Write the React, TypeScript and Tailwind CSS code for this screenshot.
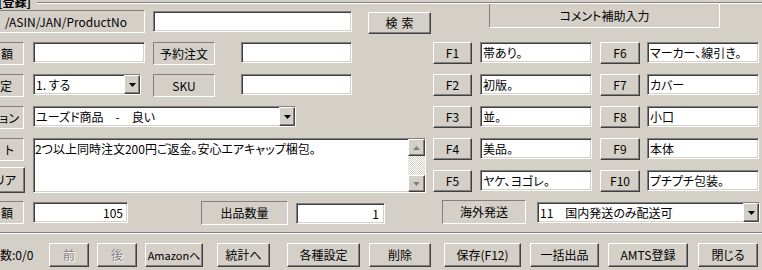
import type { ReactNode } from 'react';

const sunken =
  'bg-white border border-t-[#808080] border-l-[#808080] border-b-white border-r-white shadow-[inset_1px_1px_0_#404040,inset_-1px_-1px_0_#d4d0c8]';
const raised =
  'bg-[#d4d0c8] border border-t-white border-l-white border-b-[#404040] border-r-[#404040] shadow-[inset_-1px_-1px_0_#808080,inset_1px_1px_0_#d4d0c8]';
const edge = 'border border-t-[#808080] border-l-[#808080] border-b-white border-r-white';

function Field({ className = '', children }: { className?: string; children?: ReactNode }) {
  return <div className={`${sunken} flex items-center px-[2px] whitespace-nowrap overflow-hidden ${className}`}>{children}</div>;
}

function Label({ className = '', children }: { className?: string; children?: ReactNode }) {
  return <div className={`${edge} flex items-center whitespace-nowrap ${className}`}>{children}</div>;
}

function Btn({ className = '', disabled = false, children }: { className?: string; disabled?: boolean; children?: ReactNode }) {
  return (
    <div
      className={`${raised} flex items-center justify-center whitespace-nowrap ${
        disabled ? 'text-[#808080] [text-shadow:1px_1px_0_#fff]' : ''
      } ${className}`}
    >
      {children}
    </div>
  );
}

function Arrow({ up = false, color = '#000' }: { up?: boolean; color?: string }) {
  return (
    <svg width="7" height="4" viewBox="0 0 7 4">
      <path d={up ? 'M3.5 0 L7 4 L0 4 Z' : 'M0 0 L7 0 L3.5 4 Z'} fill={color} />
    </svg>
  );
}

function Select({ className = '', children }: { className?: string; children?: ReactNode }) {
  return (
    <div className={`${sunken} flex items-stretch ${className}`}>
      <div className="flex-1 flex items-center pl-[2px] whitespace-nowrap overflow-hidden">{children}</div>
      <div className={`${raised} w-[16px] flex items-center justify-center`}>
        <Arrow />
      </div>
    </div>
  );
}

const fkeys = [
  ['F1', '帯あり。', 'F6', 'マーカー、線引き。'],
  ['F2', '初版。', 'F7', 'カバー'],
  ['F3', '並。', 'F8', '小口'],
  ['F4', '美品。', 'F9', '本体'],
  ['F5', 'ヤケ、ヨゴレ。', 'F10', 'プチプチ包装。'],
];

export default function App() {
  return (
    <div className="relative w-[762px] h-[270px] overflow-hidden bg-[#d4d0c8] text-black text-[12px] leading-none font-['Noto_Sans_CJK_JP',sans-serif] [font-feature-settings:'palt']">
      {/* group frame */}
      <div className="absolute left-[37px] right-0 top-[2px] h-[2px] border-t border-t-[#808080] border-b border-b-white" />
      <div className="absolute left-[-2px] top-[-4px] font-bold text-[12px]">[登録]</div>

      <div className="flex h-[232px] items-start">
        {/* left column */}
        <div className="w-[433px] flex flex-col pt-[10px]">
          <div className="flex items-start h-[23px]">
            <Label className="w-[145px] h-[23px] border-l-0 justify-end pr-[17px]">/ASIN/JAN/ProductNo</Label>
            <Field className="ml-[8px] mt-[1px] w-[199px] h-[21px]" />
            <Btn className="ml-[16px] mt-[2px] w-[63px] h-[22px] tracking-[4px] pl-[4px]">検索</Btn>
          </div>

          <div className="flex items-start mt-[9px] h-[23px]">
            <Label className="w-[24px] h-[23px] border-l-0 justify-end pr-[10px]">額</Label>
            <Field className="ml-[9px] w-[112px] h-[21px]" />
            <Label className="ml-[8px] w-[62px] h-[23px] justify-center">予約注文</Label>
            <Field className="ml-[26px] w-[111px] h-[21px]" />
          </div>

          <div className="flex items-start mt-[9px] h-[23px]">
            <Label className="w-[24px] h-[23px] border-l-0 justify-end pr-[11px]">定</Label>
            <Select className="ml-[9px] w-[108px] h-[21px]">1. する</Select>
            <Label className="ml-[12px] w-[62px] h-[23px] justify-center">SKU</Label>
            <Field className="ml-[26px] w-[111px] h-[21px]" />
          </div>

          <div className="flex items-start mt-[9px] h-[23px]">
            <Label className="w-[24px] h-[23px] border-l-0 justify-end pr-[4px]">ション</Label>
            <Select className="ml-[9px] w-[263px] h-[21px]">ユーズド商品　-　良い</Select>
          </div>

          <div className="flex items-start mt-[9px]">
            <div className="flex flex-col w-[25px]">
              <Label className="w-[24px] h-[23px] border-l-0 justify-end pr-[9px]">ト</Label>
              <Btn className="mt-[6px] w-[25px] h-[26px] border-l-0 justify-end pr-[8px]">リア</Btn>
            </div>
            <div className={`${sunken} ml-[8px] w-[393px] h-[55px] flex`}>
              <div className="flex-1 pl-[1px] pt-[4px] whitespace-nowrap">2つ以上同時注文200円ご返金。安心エアキャップ梱包。</div>
              <div className="w-[17px] flex flex-col">
                <div className={`${raised} h-[17px] flex items-center justify-center`}>
                  <Arrow up color="#808080" />
                </div>
                <div className="flex-1 bg-[repeating-conic-gradient(#ffffff_0_25%,#d4d0c8_0_50%)] bg-[length:2px_2px]" />
                <div className={`${raised} h-[17px] flex items-center justify-center`}>
                  <Arrow color="#808080" />
                </div>
              </div>
            </div>
          </div>

          <div className="flex items-start mt-[8px]">
            <Label className="w-[24px] h-[23px] border-l-0 justify-end pr-[10px]">額</Label>
            <Field className="ml-[9px] mt-[1px] w-[95px] h-[21px] justify-end pr-[4px]">105</Field>
            <Label className="ml-[73px] w-[87px] h-[24px] justify-center">出品数量</Label>
            <Field className="ml-[8px] mt-[2px] w-[89px] h-[21px] justify-end pr-[5px]">1</Field>
          </div>
        </div>

        {/* right column */}
        <div className="flex-1 flex flex-col pt-[3px]">
          <Label className="ml-[56px] w-[231px] h-[25px] justify-center">コメント補助入力</Label>
          <div className="mt-[14px] flex flex-col gap-[10px]">
            {fkeys.map(([k1, v1, k2, v2]) => (
              <div key={k1} className="flex items-start h-[22px]">
                <Btn className="w-[39px] h-[22px]">{k1}</Btn>
                <Field className="ml-[8px] w-[112px] h-[21px]">{v1}</Field>
                <Btn className="ml-[8px] w-[40px] h-[22px]">{k2}</Btn>
                <Field className="ml-[7px] w-[112px] h-[21px]">{v2}</Field>
              </div>
            ))}
          </div>
          <div className="flex items-start mt-[8px]">
            <Label className="ml-[9px] w-[84px] h-[24px] justify-center">海外発送</Label>
            <Select className="ml-[11px] mt-[2px] w-[223px] h-[21px]">11　国内発送のみ配送可</Select>
          </div>
        </div>
      </div>

      {/* separator */}
      <div className="h-[2px] border-t border-t-[#808080] border-b border-b-white" />

      {/* bottom buttons */}
      <div className="flex items-start pt-[9px]">
        <div className="w-[49px] h-[24px] flex items-center">数:0/0</div>
        <Btn disabled className="w-[40px] h-[24px]">前</Btn>
        <Btn disabled className="ml-[8px] w-[40px] h-[24px]">後</Btn>
        <Btn className="ml-[8px] w-[58px] h-[24px] text-[11px]">Amazonへ</Btn>
        <Btn className="ml-[14px] w-[53px] h-[24px]">統計へ</Btn>
        <Btn className="ml-[17px] w-[73px] h-[24px]">各種設定</Btn>
        <Btn className="ml-[9px] w-[62px] h-[24px]">削除</Btn>
        <Btn className="ml-[13px] w-[77px] h-[24px]">保存(F12)</Btn>
        <Btn className="ml-[9px] w-[69px] h-[24px]">一括出品</Btn>
        <Btn className="ml-[9px] w-[80px] h-[24px]">AMTS登録</Btn>
        <Btn className="ml-[10px] w-[60px] h-[24px]">閉じる</Btn>
      </div>
    </div>
  );
}
